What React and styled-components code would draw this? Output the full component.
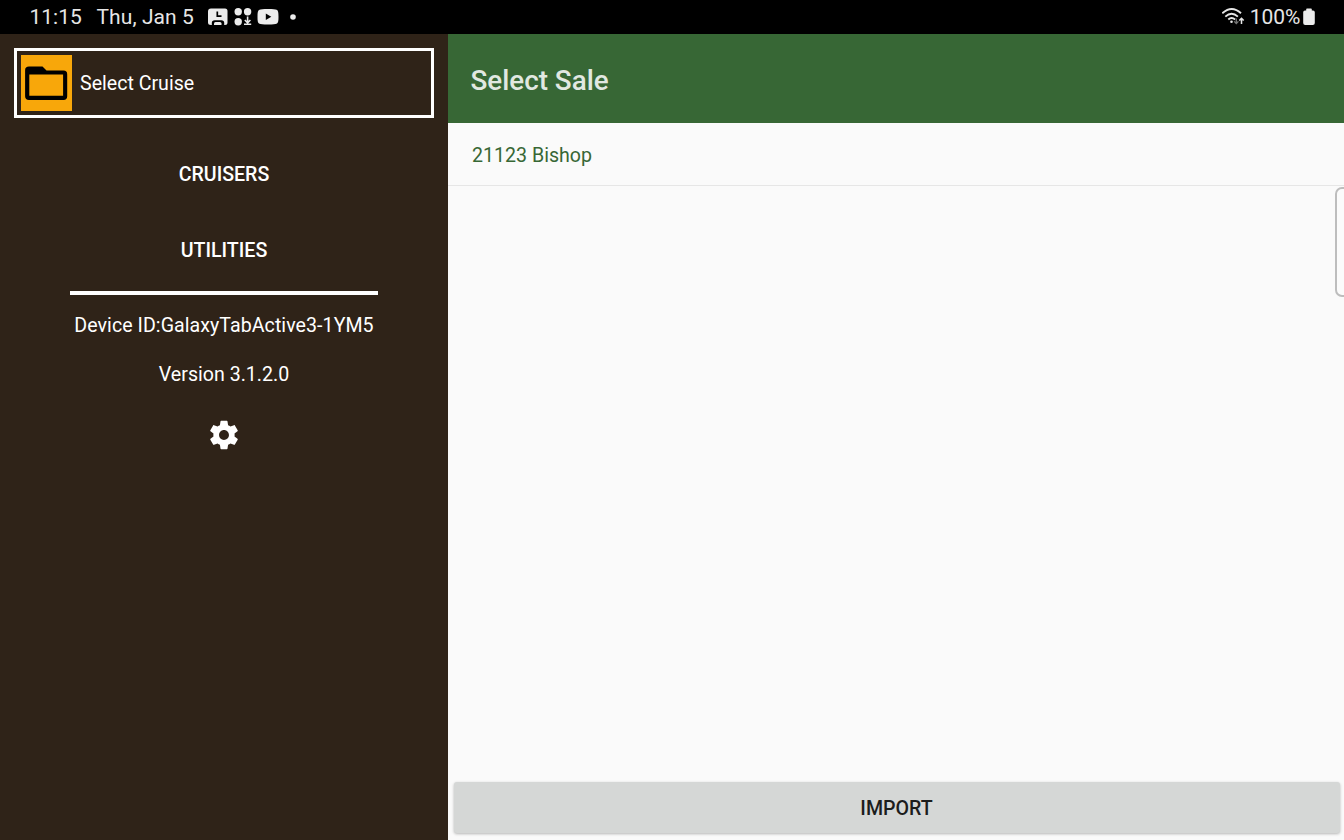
import React from 'react';
import styled, { createGlobalStyle } from 'styled-components';

const GlobalStyle = createGlobalStyle`
  * { box-sizing: border-box; }
  body {
    margin: 0;
    background: #fafafa;
    font-family: Roboto, "Liberation Sans", sans-serif;
    overflow: hidden;
  }
  svg { display: block; flex: none; }
`;

const Screen = styled.div`
  width: 1344px;
  height: 840px;
  display: flex;
  flex-direction: column;
  overflow: hidden;
`;

const StatusBar = styled.header`
  height: 33.5px;
  flex: none;
  display: flex;
  align-items: center;
  padding: 0 29px 0 29.5px;
  background: #000;
  color: #e6e6e6;
  font-size: 21px;
  line-height: 34px;
  white-space: pre;
`;

const Clock = styled.span`
  width: 67px;
`;

const Today = styled.span`
  width: 111.5px;
  letter-spacing: 0.08px;
`;

const StatusIcons = styled.div`
  flex: 1;
`;

const BatteryLevel = styled.span`
  margin: 0 2.5px 0 4.5px;
`;

const Body = styled.div`
  flex: 1;
  display: flex;
  min-height: 0;
`;

const Drawer = styled.nav`
  width: 448px;
  flex: none;
  display: flex;
  flex-direction: column;
  align-items: center;
  background: #2f2318;
  color: #fff;
  padding-top: 14px;
`;

const CruiseButton = styled.button`
  width: 420px;
  height: 70px;
  flex: none;
  display: flex;
  align-items: center;
  gap: 8.5px;
  padding: 0 0 0 4px;
  border: 3px solid #fff;
  background: transparent;
  color: #fff;
  font: 400 19.6px/24px Roboto, sans-serif;
`;

const CruiseLabel = styled.span`
  padding-top: 3px;
`;

const FolderTile = styled.span`
  width: 50.5px;
  height: 56px;
  background: #f8a70a;
`;

const DrawerButton = styled.button`
  height: 76px;
  width: 308px;
  flex: none;
  padding: 0;
  border: 0;
  background: transparent;
  color: #fff;
  font: 500 19.6px/76px Roboto, sans-serif;
  margin-top: ${(p) => p.$gap || 0}px;
`;

const Divider = styled.hr`
  width: 308px;
  height: 4.5px;
  flex: none;
  margin: 2px 0 0;
  border: 0;
  background: #fff;
`;

const Info = styled.p`
  margin: ${(p) => p.$gap}px 0 0;
  font-size: 19.6px;
  line-height: 24px;
  letter-spacing: ${(p) => p.$spacing || 0}px;
`;

const SettingsButton = styled.button`
  margin-top: 31px;
  padding: 0;
  border: 0;
  background: transparent;
`;

const Page = styled.main`
  position: relative;
  flex: 1;
  display: flex;
  flex-direction: column;
  background: #fafafa;
`;

const Toolbar = styled.div`
  height: 89.5px;
  flex: none;
  padding: 0 22.5px;
  background: #376735;
  color: #e1e8e1;
  font-size: 27.8px;
  font-weight: 500;
  line-height: 94px;
`;

const SaleRow = styled.div`
  height: 63px;
  flex: none;
  padding: 0 24px;
  border-bottom: 1px solid #e6e6e6;
  color: #376735;
  font-size: 19.6px;
  line-height: 65px;
`;

const ImportButton = styled.button`
  height: 51px;
  flex: none;
  margin: auto 4.5px 7px 5.5px;
  padding: 0;
  border: 0;
  border-radius: 3px;
  background: #d5d7d6;
  color: #1c1c1c;
  font: 500 19.6px/53px Roboto, sans-serif;
  box-shadow: 0 1px 3px rgba(0, 0, 0, 0.28);
`;

const EdgeHandle = styled.div`
  position: absolute;
  top: 153px;
  right: -8px;
  width: 17px;
  height: 110px;
  border: 2px solid #bdbdbd;
  border-radius: 7px;
  background: #fbfbfb;
`;

const NotificationIcons = () => (
  <svg width="92" height="34" viewBox="208 0 92 34" fill="#ececec">
    <path d="M211 8.500h14q2.500 0 2.500 2.500v11.500q0 2.500-2.500 2.500h-.8v-2q0-2.700-3-2.700h-6.400q-3 0-3 2.700v2H211q-3 0-3-2.500V11.500q0-3 3-3z" />
    <path d="M217.300 11.500v4.600h4.200" fill="none" stroke="#000" strokeWidth="1.700" />
    <path d="M214 25v-1.500q0-1.500 1.500-1.500h4.500q1.500 0 1.500 1.500V25z" />
    <circle cx="238.200" cy="11.800" r="3.700" />
    <circle cx="247.600" cy="11.800" r="3.700" />
    <circle cx="238.200" cy="21.700" r="3.700" />
    <path d="M247.600 16.500v6M244.800 20l2.800 2.800 2.800-2.800M244 24.300h7.200" fill="none" stroke="#ececec" strokeWidth="1.600" />
    <path d="M268 9c5 0 7.500.2 8.500.7 1.800.8 2 2.800 2 7s-.2 6.300-2 7.100c-1 .5-3.500.7-8.500.7s-7.500-.2-8.500-.7c-1.800-.8-2-2.900-2-7.100s.2-6.200 2-7c1-.5 3.500-.7 8.500-.7z" />
    <path d="M265.800 13.600v6.400l5.500-3.200z" fill="#000" />
    <circle cx="293" cy="17" r="2.800" />
  </svg>
);

const WifiIcon = () => (
  <svg width="23" height="34" viewBox="1222 0 23 34" fill="none" stroke="#e6e6e6" strokeWidth="1.900">
    <path d="M1222.300 13.300q9.500-8.600 18.700 0" />
    <path d="M1225.300 16.600q6.300-5.600 12.600 0" />
    <path d="M1228.300 19.500q3.300-2.900 6.800 0" />
    <circle cx="1231.500" cy="21.700" r="1.300" fill="#e6e6e6" stroke="none" />
    <path d="M1236.300 18.500v4.800M1234.200 21.400l2.100 2.200 2.100-2.200" stroke="#777" strokeWidth="1.300" />
    <path d="M1241.500 24v-5M1239.300 20.500l2.200-2.200 2.200 2.200" strokeWidth="1.500" />
  </svg>
);

const BatteryIcon = () => (
  <svg width="12" height="34" viewBox="0 0 12 34" fill="#ececec">
    <path d="M4 8.500h4q.8 0 .8.800v1.200h1.200q1.800 0 1.800 1.800V23q0 2-2 2H2.200q-2 0-2-2V12.300q0-1.800 1.800-1.800h1.200V9.300q0-.8.800-.8z" />
  </svg>
);

const FolderIcon = () => (
  <svg width="50.500" height="56" viewBox="21 54.500 50.500 56">
    <path
      fillRule="evenodd"
      d="M29 66h13.500l4 4H63.500q3.700 0 3.700 3.700v22q0 3.700-3.700 3.700H29q-3.900 0-3.900-3.700V69.700Q25.100 66 29 66zM29.300 74v21.200h33.800V74z"
    />
  </svg>
);

const GearIcon = () => (
  <svg width="34" height="34" viewBox="0 0 24 24" fill="#fff">
    <path d="M19.430 12.980c.04-.32.070-.64.070-.98s-.03-.66-.07-.98l2.110-1.650c.19-.15.24-.42.120-.64l-2-3.460c-.12-.22-.39-.3-.61-.22l-2.490 1c-.52-.4-1.080-.73-1.690-.98l-.38-2.650C14.460 2.180 14.250 2 14 2h-4c-.25 0-.46.180-.49.420l-.38 2.650c-.61.250-1.170.590-1.690.980l-2.490-1c-.23-.09-.49 0-.61.220l-2 3.460c-.13.220-.07.490.12.640l2.110 1.650c-.04.320-.07.650-.07.980s.03.660.07.980l-2.110 1.650c-.19.150-.24.420-.12.640l2 3.460c.12.220.39.300.61.220l2.490-1c.52.400 1.080.730 1.690.980l.38 2.650c.03.240.24.420.49.420h4c.25 0 .46-.18.490-.42l.38-2.650c.61-.25 1.170-.59 1.690-.98l2.490 1c.23.090.49 0 .61-.22l2-3.460c.12-.22.070-.49-.12-.64l-2.110-1.650zM12 15.500c-1.930 0-3.500-1.570-3.500-3.500s1.570-3.500 3.500-3.500 3.500 1.570 3.500 3.500-1.570 3.500-3.500 3.500z" />
  </svg>
);

export default function App() {
  return (
    <>
      <GlobalStyle />
      <Screen>
        <StatusBar>
          <Clock>11:15</Clock>
          <Today>Thu, Jan 5</Today>
          <StatusIcons>
            <NotificationIcons />
          </StatusIcons>
          <WifiIcon />
          <BatteryLevel>100%</BatteryLevel>
          <BatteryIcon />
        </StatusBar>
        <Body>
          <Drawer>
            <CruiseButton>
              <FolderTile>
                <FolderIcon />
              </FolderTile>
              <CruiseLabel>Select Cruise</CruiseLabel>
            </CruiseButton>
            <DrawerButton $gap={19}>CRUISERS</DrawerButton>
            <DrawerButton>UTILITIES</DrawerButton>
            <Divider />
            <Info $gap={19} $spacing={0.05}>Device ID:GalaxyTabActive3-1YM5</Info>
            <Info $gap={25}>Version 3.1.2.0</Info>
            <SettingsButton aria-label="Settings">
              <GearIcon />
            </SettingsButton>
          </Drawer>
          <Page>
            <Toolbar>Select Sale</Toolbar>
            <SaleRow>21123 Bishop</SaleRow>
            <ImportButton>IMPORT</ImportButton>
            <EdgeHandle />
          </Page>
        </Body>
      </Screen>
    </>
  );
}
